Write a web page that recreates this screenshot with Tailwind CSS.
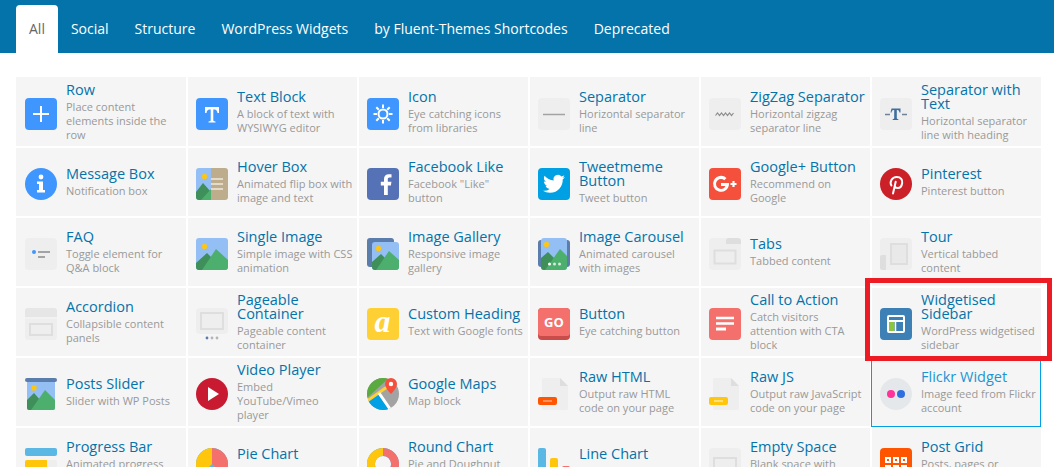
<!doctype html>
<html>
<head>
<meta charset="utf-8">
<script src="https://cdn.jsdelivr.net/npm/@tailwindcss/browser@4"></script>
</head>
<body class="relative h-[467px] w-[1054px] overflow-hidden bg-white font-['Open_Sans',sans-serif]">

<nav class="flex h-[53px] items-end bg-[#0473aa] pl-4 text-[14px] leading-[48px] text-white">
  <a class="rounded-t-[4px] bg-white px-[13px] text-[#666]">All</a>
  <a class="px-[13px]">Social</a>
  <a class="px-[13px]">Structure</a>
  <a class="px-[13px]">WordPress Widgets</a>
  <a class="px-[13px]">by Fluent-Themes Shortcodes</a>
  <a class="px-[13px]">Deprecated</a>
</nav>

<div class="ml-4 mt-[25px] grid grid-cols-[170px_repeat(5,169px)] auto-rows-[68px] gap-[2px] text-[11px] leading-[14px] text-[#999]">

  <!-- Row 1 -->
  <div class="-mt-px flex items-center gap-[9px] bg-[#f5f5f5] pl-[9px] pt-px">
    <svg class="mt-1 size-8 shrink-0" viewBox="0 0 32 32"><rect width="32" height="32" rx="4" fill="#3f96fe"/><path d="M16 8v16M8 16h16" stroke="#fff" stroke-width="2"/></svg>
    <div class="w-[116px]"><div class="mb-[3px] text-[14.5px] font-medium text-[#0473aa]">Row</div>Place content elements inside the row</div>
  </div>
  <div class="-mt-px flex items-center gap-[9px] bg-[#f5f5f5] pl-[8px] pt-px">
    <svg class="mt-1 size-8 shrink-0" viewBox="0 0 32 32"><rect width="32" height="32" rx="4" fill="#3f96fe"/><path d="M9 9h14v6h-1.500c-.3-2.300-1.200-3.500-3-3.500h-1.200v10.500c0 1 .5 1.300 2.200 1.400V24.500h-7v-1.100c1.700-.1 2.200-.4 2.200-1.400V11.500h-1.200c-1.800 0-2.700 1.200-3 3.500H9z" fill="#fff"/></svg>
    <div class="w-[116px]"><div class="mb-[3px] text-[14.5px] font-medium text-[#0473aa]">Text Block</div>A block of text with WYSIWYG editor</div>
  </div>
  <div class="-mt-px flex items-center gap-[9px] bg-[#f5f5f5] pl-[8px] pt-px">
    <svg class="mt-1 size-8 shrink-0" viewBox="0 0 32 32"><rect width="32" height="32" rx="4" fill="#3f96fe"/><circle cx="16" cy="16" r="4.500" fill="none" stroke="#fff" stroke-width="2"/><path d="M16 6.500v3.500M16 22v3.500M6.500 16H10M22 16h3.500M9.300 9.300l2.500 2.500M20.200 20.200l2.500 2.500M9.300 22.700l2.500-2.500M20.200 11.800l2.500-2.500" stroke="#fff" stroke-width="2"/></svg>
    <div class="w-[116px]"><div class="mb-[3px] text-[14.5px] font-medium text-[#0473aa]">Icon</div>Eye catching icons from libraries</div>
  </div>
  <div class="-mt-px flex items-center gap-[9px] bg-[#f5f5f5] pl-[8px] pt-px">
    <svg class="mt-1 size-8 shrink-0" viewBox="0 0 32 32"><rect width="32" height="32" rx="4" fill="#eee"/><path d="M5 16.500h22" stroke="#a3a3a3" stroke-width="1.500"/></svg>
    <div class="w-[116px]"><div class="mb-[3px] text-[14.5px] font-medium text-[#0473aa]">Separator</div>Horizontal separator line</div>
  </div>
  <div class="-mt-px flex items-center gap-[9px] bg-[#f5f5f5] pl-[8px] pt-px">
    <svg class="mt-1 size-8 shrink-0" viewBox="0 0 32 32"><rect width="32" height="32" rx="4" fill="#eee"/><path d="M6.500 17.500l2-2.500 2 2.500 2-2.500 2 2.500 2-2.500 2 2.500 2-2.500 2 2.500 2-2.500" fill="none" stroke="#8d8d8d" stroke-width="1.200"/></svg>
    <div class="w-[116px]"><div class="mb-[3px] text-[14.5px] font-medium text-[#0473aa]">ZigZag Separator</div>Horizontal zigzag separator line</div>
  </div>
  <div class="-mt-px flex items-center gap-[9px] bg-[#f5f5f5] pl-[8px] pt-px">
    <svg class="mt-1 size-8 shrink-0" viewBox="0 0 32 32"><rect width="32" height="32" rx="4" fill="#eee"/><path d="M5 16.500h5M22 16.500h5" stroke="#6f8296" stroke-width="1.500"/><path d="M11.500 10.500h9v4h-1c-.2-1.500-.8-2.500-2-2.500h-.7v8c0 .7.300.9 1.500 1v1h-5.600v-1c1.200-.1 1.500-.3 1.500-1v-8h-.7c-1.200 0-1.800 1-2 2.500h-1z" fill="#3d6f9e"/></svg>
    <div class="w-[116px]"><div class="mb-[3px] text-[14.5px] font-medium text-[#0473aa]">Separator with Text</div>Horizontal separator line with heading</div>
  </div>

  <!-- Row 2 -->
  <div class="flex items-center gap-[9px] bg-[#f5f5f5] pl-[9px]">
    <svg class="mt-1 size-8 shrink-0" viewBox="0 0 32 32"><circle cx="16" cy="16" r="16" fill="#3f96fe"/><circle cx="16" cy="9" r="2.400" fill="#fff"/><path d="M12 13.500h6V22h2v2.500h-8V22h2v-6h-2z" fill="#fff"/></svg>
    <div class="w-[116px]"><div class="mb-[3px] text-[14.5px] font-medium text-[#0473aa]">Message Box</div>Notification box</div>
  </div>
  <div class="flex items-center gap-[9px] bg-[#f5f5f5] pl-[8px]">
    <svg class="mt-1 size-8 shrink-0" viewBox="0 0 32 32"><clipPath id="c1"><rect width="32" height="32" rx="3"/></clipPath><g clip-path="url(#c1)"><rect width="15" height="32" fill="#93bff5"/><rect x="15" width="17" height="32" fill="#bdad8c"/><circle cx="8.500" cy="8.500" r="2.700" fill="#ffc60b"/><path d="M0 24l7-9 8 9v8H0z" fill="#3f8f5a"/><path d="M5 32l10-11v11z" fill="#4caf6d"/><path d="M15 11h12M15 16h12M15 21h12" stroke="#efe9dc" stroke-width="1.500"/></g></svg>
    <div class="w-[116px]"><div class="mb-[3px] text-[14.5px] font-medium text-[#0473aa]">Hover Box</div>Animated flip box with image and text</div>
  </div>
  <div class="flex items-center gap-[9px] bg-[#f5f5f5] pl-[8px]">
    <svg class="mt-1 size-8 shrink-0" viewBox="0 0 32 32"><rect width="32" height="32" rx="4" fill="#5572b6"/><path d="M17 27V17.500h-3.200v-3.700H17v-2.700c0-3.200 1.900-4.900 4.800-4.900 1.300 0 2.400.1 2.700.1v3.300h-1.900c-1.500 0-1.800.7-1.800 1.800v2.400h3.600l-.5 3.700h-3.100V27z" fill="#fff"/></svg>
    <div class="w-[116px]"><div class="mb-[3px] text-[14.5px] font-medium text-[#0473aa]">Facebook Like</div>Facebook "Like" button</div>
  </div>
  <div class="flex items-center gap-[9px] bg-[#f5f5f5] pl-[8px]">
    <svg class="mt-1 size-8 shrink-0" viewBox="0 0 32 32"><rect width="32" height="32" rx="4" fill="#00a0e4"/><path d="M27 9.100c-.8.400-1.700.600-2.600.7.900-.6 1.600-1.400 2-2.500-.9.500-1.900.900-2.900 1.100a4.500 4.500 0 0 0-7.800 4.100C12 12.300 8.700 10.500 6.500 7.800c-1.200 2.100-.6 4.700 1.400 6-.7 0-1.400-.2-2-.6 0 2.200 1.500 4.100 3.600 4.500-.7.200-1.400.2-2 .1.600 1.800 2.300 3.100 4.200 3.100A9 9 0 0 1 5 22.800c2 1.300 4.400 2 6.900 2 8.400 0 13.100-7.100 12.800-13.400.9-.6 1.700-1.400 2.300-2.300z" fill="#fff"/></svg>
    <div class="w-[116px]"><div class="mb-[3px] text-[14.5px] font-medium text-[#0473aa]">Tweetmeme Button</div>Tweet button</div>
  </div>
  <div class="flex items-center gap-[9px] bg-[#f5f5f5] pl-[8px]">
    <svg class="mt-1 size-8 shrink-0" viewBox="0 0 32 32"><rect width="32" height="32" rx="4" fill="#f4503c"/><path transform="translate(1 0)" d="M11 15v3h4.300c-.6 1.900-2.100 3-4.300 3a5 5 0 0 1 0-10c1.300 0 2.400.4 3.300 1.200l2.200-2.200A8 8 0 1 0 19 16c0-.3 0-.7-.1-1z" fill="#fff"/><path d="M24.500 13v6M21.500 16h6" stroke="#fff" stroke-width="2.200"/></svg>
    <div class="w-[116px]"><div class="mb-[3px] text-[14.5px] font-medium text-[#0473aa]">Google+ Button</div>Recommend on Google</div>
  </div>
  <div class="flex items-center gap-[9px] bg-[#f5f5f5] pl-[8px]">
    <svg class="mt-1 size-8 shrink-0" viewBox="0 0 32 32"><circle cx="16" cy="16" r="16" fill="#cb2027"/><path d="M13 25.500l2.700-11.700M11.400 17.500c-2-3.300.3-8.500 5.300-8.500 4.300 0 6 3 5.500 6-.5 3.200-2.400 5-4.500 5-1.500 0-2.600-.8-3-2" fill="none" stroke="#fff" stroke-width="2" stroke-linecap="round"/></svg>
    <div class="w-[116px]"><div class="mb-[3px] text-[14.5px] font-medium text-[#0473aa]">Pinterest</div>Pinterest button</div>
  </div>

  <!-- Row 3 -->
  <div class="flex items-center gap-[9px] bg-[#f5f5f5] pl-[9px]">
    <svg class="mt-1 size-8 shrink-0" viewBox="0 0 32 32"><rect width="32" height="32" rx="4" fill="#eee"/><circle cx="9" cy="14" r="2" fill="#3f96fe"/><path d="M13 14h12" stroke="#a3a3a3" stroke-width="2"/><path d="M13 19h7" stroke="#a3a3a3" stroke-width="2"/></svg>
    <div class="w-[116px]"><div class="mb-[3px] text-[14.5px] font-medium text-[#0473aa]">FAQ</div>Toggle element for Q&amp;A block</div>
  </div>
  <div class="flex items-center gap-[9px] bg-[#f5f5f5] pl-[8px]">
    <svg class="mt-1 size-8 shrink-0" viewBox="0 0 32 32"><clipPath id="c2"><rect width="32" height="32" rx="3"/></clipPath><g clip-path="url(#c2)"><rect width="32" height="32" fill="#93bff5"/><circle cx="8.500" cy="8.500" r="2.700" fill="#ffc60b"/><path d="M0 25l11-10 8 8-8 9H0z" fill="#3f8f5a"/><path d="M6 32l14-21 12 11v10z" fill="#4caf6d"/></g></svg>
    <div class="w-[116px]"><div class="mb-[3px] text-[14.5px] font-medium text-[#0473aa]">Single Image</div>Simple image with CSS animation</div>
  </div>
  <div class="flex items-center gap-[9px] bg-[#f5f5f5] pl-[8px]">
    <svg class="mt-1 size-8 shrink-0" viewBox="0 0 32 32"><rect width="27" height="29" rx="3" fill="#5a7dac"/><clipPath id="c3"><rect x="5" y="4" width="27" height="28" rx="3"/></clipPath><g clip-path="url(#c3)"><rect x="5" y="4" width="27" height="28" fill="#93bff5"/><circle cx="11.500" cy="10.500" r="2.700" fill="#ffc60b"/><path d="M5 24l9-8 7 7-7 9H5z" fill="#3f8f5a"/><path d="M9 32l13-19 10 9v10z" fill="#4caf6d"/></g></svg>
    <div class="w-[116px]"><div class="mb-[3px] text-[14.5px] font-medium text-[#0473aa]">Image Gallery</div>Responsive image gallery</div>
  </div>
  <div class="flex items-center gap-[9px] bg-[#f5f5f5] pl-[8px]">
    <svg class="mt-1 size-8 shrink-0" viewBox="0 0 32 32"><rect y="2" width="32" height="27" rx="3" fill="#5a7dac"/><clipPath id="c4"><rect x="3" width="26" height="32" rx="3"/></clipPath><g clip-path="url(#c4)"><rect x="3" width="26" height="32" fill="#93bff5"/><circle cx="8.500" cy="6.500" r="2.700" fill="#ffc60b"/><path d="M3 20l7-6 7 7-7 11H3z" fill="#3f8f5a"/><path d="M7 32l15-21 7 7v14z" fill="#4caf6d"/></g><circle cx="11.500" cy="26" r="1.500" fill="#fff"/><circle cx="16.500" cy="26" r="1.500" fill="#d7e8dc"/><circle cx="21.500" cy="26" r="1.500" fill="#d7e8dc"/></svg>
    <div class="w-[116px]"><div class="mb-[3px] text-[14.5px] font-medium text-[#0473aa]">Image Carousel</div>Animated carousel with images</div>
  </div>
  <div class="flex items-center gap-[9px] bg-[#f5f5f5] pl-[8px]">
    <svg class="mt-1 size-8 shrink-0" viewBox="0 0 32 32"><rect width="32" height="32" rx="4" fill="#eee"/><path d="M17 6V3a3 3 0 0 1 3-3h9a3 3 0 0 1 3 3v3z" fill="#dedede"/><rect x="5.500" y="12.500" width="21" height="13" fill="none" stroke="#dedede" stroke-width="2"/></svg>
    <div class="w-[116px]"><div class="mb-[3px] text-[14.5px] font-medium text-[#0473aa]">Tabs</div>Tabbed content</div>
  </div>
  <div class="flex items-center gap-[9px] bg-[#f5f5f5] pl-[8px]">
    <svg class="mt-1 size-8 shrink-0" viewBox="0 0 32 32"><rect width="32" height="32" rx="4" fill="#eee"/><path d="M0 19a2 2 0 0 1 2-2h4v15H2a2 2 0 0 1-2-2z" fill="#dedede"/><rect x="11" y="6" width="16" height="20" fill="#e9e9e9" stroke="#dedede" stroke-width="2"/></svg>
    <div class="w-[116px]"><div class="mb-[3px] text-[14.5px] font-medium text-[#0473aa]">Tour</div>Vertical tabbed content</div>
  </div>

  <!-- Row 4 -->
  <div class="flex items-center gap-[9px] bg-[#f5f5f5] pl-[9px]">
    <svg class="mt-1 size-8 shrink-0" viewBox="0 0 32 32"><rect width="32" height="32" rx="3" fill="#eee"/><path d="M0 9V3a3 3 0 0 1 3-3h26a3 3 0 0 1 3 3v6z" fill="#e6e6e6"/><path d="M0 10h32" stroke="#f5f5f5"/><rect x="5" y="16" width="22" height="11" fill="none" stroke="#dedede" stroke-width="2"/></svg>
    <div class="w-[116px]"><div class="mb-[3px] text-[14.5px] font-medium text-[#0473aa]">Accordion</div>Collapsible content panels</div>
  </div>
  <div class="flex items-center gap-[9px] bg-[#f5f5f5] pl-[8px]">
    <svg class="mt-1 size-8 shrink-0" viewBox="0 0 32 32"><rect width="32" height="26" rx="4" fill="#eee"/><rect x="5" y="5" width="22" height="16" fill="none" stroke="#dedede" stroke-width="2"/><circle cx="11" cy="30" r="1.400" fill="#5a7dac"/><circle cx="16" cy="30" r="1.400" fill="#b5b5b5"/><circle cx="21" cy="30" r="1.400" fill="#b5b5b5"/></svg>
    <div class="w-[116px]"><div class="mb-[3px] text-[14.5px] font-medium text-[#0473aa]">Pageable Container</div>Pageable content container</div>
  </div>
  <div class="flex items-center gap-[9px] bg-[#f5f5f5] pl-[8px]">
    <svg class="mt-1 size-8 shrink-0" viewBox="0 0 32 32"><rect width="32" height="32" rx="4" fill="#ffd034"/><text x="15.500" y="24" text-anchor="middle" font-family="Liberation Serif, serif" font-style="italic" font-weight="700" font-size="32" fill="#fff">a</text></svg>
    <div class="w-[116px]"><div class="mb-[3px] text-[14.5px] font-medium text-[#0473aa]">Custom Heading</div>Text with Google fonts</div>
  </div>
  <div class="flex items-center gap-[9px] bg-[#f5f5f5] pl-[8px]">
    <svg class="mt-1 size-8 shrink-0" viewBox="0 0 32 32"><rect width="32" height="32" rx="4" fill="#c94c4a"/><path d="M0 4a4 4 0 0 1 4-4h24a4 4 0 0 1 4 4v21a3 3 0 0 1-3 3H3a3 3 0 0 1-3-3z" fill="#f3706d"/><text x="16" y="19" text-anchor="middle" font-family="Open Sans, sans-serif" font-weight="700" font-size="13" fill="#fff">GO</text></svg>
    <div class="w-[116px]"><div class="mb-[3px] text-[14.5px] font-medium text-[#0473aa]">Button</div>Eye catching button</div>
  </div>
  <div class="flex items-center gap-[9px] bg-[#f5f5f5] pl-[8px]">
    <svg class="mt-1 size-8 shrink-0" viewBox="0 0 32 32"><rect width="32" height="32" rx="4" fill="#f3706d"/><path d="M7 10h18M7 15.500h18" stroke="#fff" stroke-width="2.500"/><path d="M7 21h10" stroke="#fff" stroke-width="3"/></svg>
    <div class="w-[116px]"><div class="mb-[3px] text-[14.5px] font-medium text-[#0473aa]">Call to Action</div>Catch visitors attention with CTA block</div>
  </div>
  <div class="flex items-center gap-[9px] bg-[#f5f5f5] pl-[8px]">
    <svg class="mt-1 size-8 shrink-0" viewBox="0 0 32 32"><rect width="32" height="32" rx="4" fill="#3d80b6"/><rect x="9" y="14" width="5.500" height="9.500" fill="#8cc63f"/><rect x="8" y="8" width="16" height="16" rx="1" fill="none" stroke="#fff" stroke-width="2"/><path d="M8 13h16" stroke="#fff" stroke-width="2"/><path d="M15.500 13v11" stroke="#fff" stroke-width="1.500"/></svg>
    <div class="w-[116px]"><div class="mb-[3px] text-[14.5px] font-medium text-[#0473aa]">Widgetised Sidebar</div>WordPress widgetised sidebar</div>
  </div>

  <!-- Row 5 -->
  <div class="flex items-center gap-[9px] bg-[#f5f5f5] pl-[9px]">
    <svg class="mt-1 size-8 shrink-0" viewBox="0 0 32 32"><clipPath id="c5"><rect x="2" width="28" height="32" rx="2"/></clipPath><g clip-path="url(#c5)"><rect x="2" width="28" height="32" fill="#93bff5"/><rect x="6.500" y="7.500" width="5" height="5" rx="1" fill="#ffc60b"/><path d="M2 22l7-7 7 8-6 9H2z" fill="#3f8f5a"/><path d="M6 32l14-20 10 10v10z" fill="#4caf6d"/></g><rect width="32" height="4" rx="2" fill="#5a7dac"/></svg>
    <div class="w-[116px]"><div class="mb-[3px] text-[14.5px] font-medium text-[#0473aa]">Posts Slider</div>Slider with WP Posts</div>
  </div>
  <div class="flex items-center gap-[9px] bg-[#f5f5f5] pl-[8px]">
    <svg class="mt-1 size-8 shrink-0" viewBox="0 0 32 32"><circle cx="16" cy="16" r="16" fill="#c81b31"/><path d="M12 9l11 7-11 7z" fill="#fff"/></svg>
    <div class="w-[116px]"><div class="mb-[3px] text-[14.5px] font-medium text-[#0473aa]">Video Player</div>Embed YouTube/Vimeo player</div>
  </div>
  <div class="flex items-center gap-[9px] bg-[#f5f5f5] pl-[8px]">
    <svg class="mt-1 size-8 shrink-0" viewBox="0 0 32 32"><clipPath id="c6"><circle cx="16" cy="16" r="16"/></clipPath><g clip-path="url(#c6)"><rect width="32" height="32" fill="#a3a3a3"/><path d="M0 0h22L0 20z" fill="#5aaa40"/><path d="M0 32V24l11-8 11 16z" fill="#00a0e4"/><path d="M0 23L20 9" stroke="#ffd034" stroke-width="3"/><path d="M12 15l11 16" stroke="#fff" stroke-width="3"/></g><path d="M24 0a6 6 0 0 0-6 6c0 4 6 10 6 10s6-6 6-10a6 6 0 0 0-6-6z" fill="#f4503c"/><circle cx="24" cy="6" r="2.200" fill="#fff"/></svg>
    <div class="w-[116px]"><div class="mb-[3px] text-[14.5px] font-medium text-[#0473aa]">Google Maps</div>Map block</div>
  </div>
  <div class="flex items-center gap-[9px] bg-[#f5f5f5] pl-[8px]">
    <svg class="mt-1 size-8 shrink-0" viewBox="0 0 32 32"><path d="M4 2a2 2 0 0 1 2-2h16l8 8v22a2 2 0 0 1-2 2H6a2 2 0 0 1-2-2z" fill="#eee"/><path d="M22 0l8 8h-8z" fill="#dedede"/><rect y="19" width="19" height="8" rx="2" fill="#ff5500"/><path d="M5 23h9" stroke="#ffa37a" stroke-width="1.500"/></svg>
    <div class="w-[116px]"><div class="mb-[3px] text-[14.5px] font-medium text-[#0473aa]">Raw HTML</div>Output raw HTML code on your page</div>
  </div>
  <div class="flex items-center gap-[9px] bg-[#f5f5f5] pl-[8px]">
    <svg class="mt-1 size-8 shrink-0" viewBox="0 0 32 32"><path d="M4 2a2 2 0 0 1 2-2h16l8 8v22a2 2 0 0 1-2 2H6a2 2 0 0 1-2-2z" fill="#eee"/><path d="M22 0l8 8h-8z" fill="#dedede"/><rect y="19" width="19" height="8" rx="2" fill="#ffc60b"/><path d="M5 23h9" stroke="#ffe9a0" stroke-width="1.500"/></svg>
    <div class="w-[116px]"><div class="mb-[3px] text-[14.5px] font-medium text-[#0473aa]">Raw JS</div>Output raw JavaScript code on your page</div>
  </div>
  <div class="-my-px -ml-px flex items-center gap-[9px] border border-[#00a0e4] bg-[#f5f5f5] pl-[8px]">
    <svg class="mt-1 size-8 shrink-0" viewBox="0 0 32 32"><circle cx="16" cy="16" r="16" fill="#e5e8ea"/><circle cx="11" cy="16" r="4" fill="#ff3399"/><circle cx="21" cy="16" r="4" fill="#2e6fe0"/></svg>
    <div class="w-[116px]"><div class="mb-[3px] text-[14.5px] font-medium text-[#1b95d3]">Flickr Widget</div>Image feed from Flickr account</div>
  </div>

  <!-- Row 6 -->
  <div class="flex items-center gap-[9px] bg-[#f5f5f5] pl-[9px]">
    <svg class="mt-1 size-8 shrink-0" viewBox="0 0 32 32"><rect width="32" height="8" rx="2" fill="#5bb8e4"/><rect y="12" width="32" height="8" rx="2" fill="#eee"/><path d="M2 12h20v8H2a2 2 0 0 1-2-2v-4a2 2 0 0 1 2-2z" fill="#ffc60b"/><rect y="24" width="32" height="8" rx="2" fill="#f3706d"/></svg>
    <div class="w-[116px]"><div class="mb-[3px] text-[14.5px] font-medium text-[#0473aa]">Progress Bar</div>Animated progress bar</div>
  </div>
  <div class="flex items-center gap-[9px] bg-[#f5f5f5] pl-[8px]">
    <svg class="mt-1 size-8 shrink-0" viewBox="0 0 32 32"><circle cx="16" cy="16" r="16" fill="#5bb8e4"/><path d="M16 0a16 16 0 0 1 11 27.600L16 16z" fill="#f3706d"/><path d="M16 0a16 16 0 0 0-16 16 16 16 0 0 0 5 11.600L16 16z" fill="#ffc60b"/></svg>
    <div class="w-[116px]"><div class="mb-[3px] text-[14.5px] font-medium text-[#0473aa]">Pie Chart</div>Animated pie chart</div>
  </div>
  <div class="flex items-center gap-[9px] bg-[#f5f5f5] pl-[8px]">
    <svg class="mt-1 size-8 shrink-0" viewBox="0 0 32 32"><circle cx="16" cy="16" r="12" fill="none" stroke="#5bb8e4" stroke-width="8"/><path d="M16 4a12 12 0 0 1 8.500 20.500" fill="none" stroke="#f3706d" stroke-width="8"/><path d="M16 4A12 12 0 0 0 7.500 24.500" fill="none" stroke="#ffc60b" stroke-width="8"/></svg>
    <div class="w-[116px]"><div class="mb-[3px] text-[14.5px] font-medium text-[#0473aa]">Round Chart</div>Pie and Doughnut charts</div>
  </div>
  <div class="flex items-center gap-[9px] bg-[#f5f5f5] pl-[8px]">
    <svg class="mt-1 size-8 shrink-0" viewBox="0 0 32 32"><rect width="8" height="32" rx="2" fill="#5bb8e4"/><rect x="12" y="10" width="8" height="22" rx="2" fill="#ffc60b"/><rect x="24" y="18" width="8" height="14" rx="2" fill="#f3706d"/></svg>
    <div class="w-[116px]"><div class="mb-[3px] text-[14.5px] font-medium text-[#0473aa]">Line Chart</div>Line and Bar charts</div>
  </div>
  <div class="flex items-center gap-[9px] bg-[#f5f5f5] pl-[8px]">
    <svg class="mt-1 size-8 shrink-0" viewBox="0 0 32 32"><rect width="32" height="32" rx="4" fill="#eee"/><rect x="5" y="10" width="22" height="12" fill="none" stroke="#dedede" stroke-width="2"/></svg>
    <div class="w-[116px]"><div class="mb-[3px] text-[14.5px] font-medium text-[#0473aa]">Empty Space</div>Blank space with custom height</div>
  </div>
  <div class="flex items-center gap-[9px] bg-[#f5f5f5] pl-[8px]">
    <svg class="mt-1 size-8 shrink-0" viewBox="0 0 32 32"><rect width="32" height="32" rx="4" fill="#ff5500"/><path d="M5 9h6v6H5zM13 9h6v6h-6zM21 9h6v6h-6zM5 17h6v6H5zM13 17h6v6h-6zM21 17h6v6h-6z" fill="#fff"/><path d="M7 11h2v2H7zM15 11h2v2h-2zM23 11h2v2h-2zM7 19h2v2H7zM15 19h2v2h-2zM23 19h2v2h-2z" fill="#ff5500"/></svg>
    <div class="w-[116px]"><div class="mb-[3px] text-[14.5px] font-medium text-[#0473aa]">Post Grid</div>Posts, pages or custom posts in grid</div>
  </div>
</div>

<div class="pointer-events-none absolute left-[865px] top-[278px] h-[83px] w-[187px] border-[5px] border-[#ed1c24]"></div>
</body>
</html>
